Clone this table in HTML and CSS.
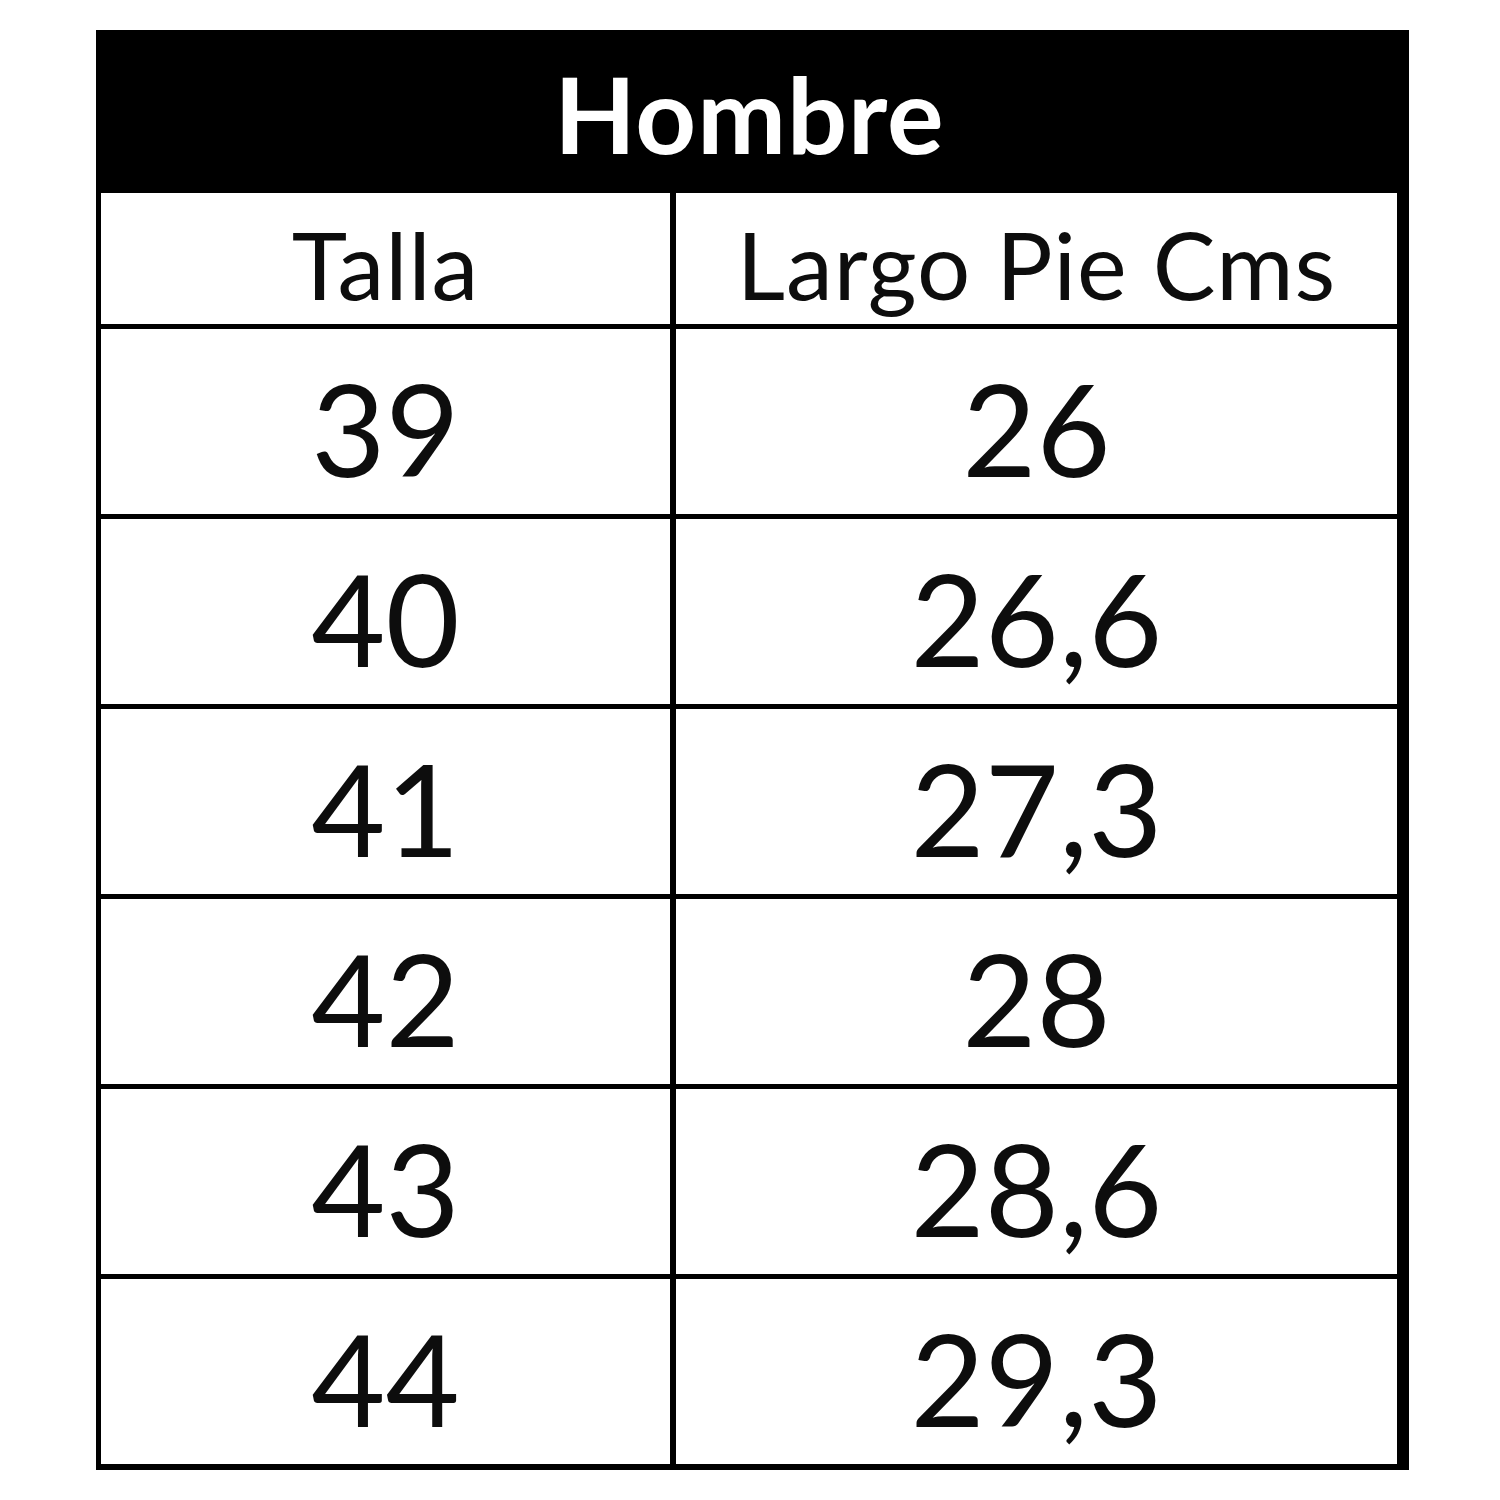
FILE: index.html
```html
<!DOCTYPE html>
<html lang="es">
<head>
<meta charset="utf-8">
<title>Hombre - Tallas</title>
<link rel="stylesheet" href="styles.css">
</head>
<body>
<div class="chart">
  <div class="chart-title">Hombre</div>
  <div class="grid">
    <div class="cell head">Talla</div>
    <div class="cell head">Largo Pie Cms</div>
    <div class="cell">39</div><div class="cell">26</div>
    <div class="cell">40</div><div class="cell">26,6</div>
    <div class="cell">41</div><div class="cell">27,3</div>
    <div class="cell">42</div><div class="cell">28</div>
    <div class="cell">43</div><div class="cell">28,6</div>
    <div class="cell">44</div><div class="cell">29,3</div>
  </div>
</div>
</body>
</html>
```

FILE: styles.css
```css
html, body {
  margin: 0;
  padding: 0;
  background: #ffffff;
}
body {
  padding: 30px 0 0 96px;
  font-family: Lato, "Open Sans", sans-serif;
  color: #0d0d0d;
}
.chart {
  width: 1313px;
  box-sizing: border-box;
  border-left: 5px solid #000;
  border-right: 11px solid #000;
  border-bottom: 6px solid #000;
  background: #000;
}
.chart-title {
  height: 163px;
  display: flex;
  align-items: center;
  justify-content: center;
  color: #ffffff;
  font-weight: 700;
  font-size: 106px;
  letter-spacing: 1px;
  padding-top: 2px;
  box-sizing: border-box;
}
.grid {
  display: grid;
  grid-template-columns: 569px 721px;
  grid-template-rows: 131px repeat(6, 185px);
  column-gap: 6px;
  row-gap: 5px;
  background: #000;
}
.cell {
  background: #ffffff;
  display: flex;
  align-items: center;
  justify-content: center;
  font-size: 128px;
  padding-top: 12px;
  box-sizing: border-box;
}
.cell.head {
  font-size: 94px;
  padding-top: 10px;
  letter-spacing: 1px;
}
```
